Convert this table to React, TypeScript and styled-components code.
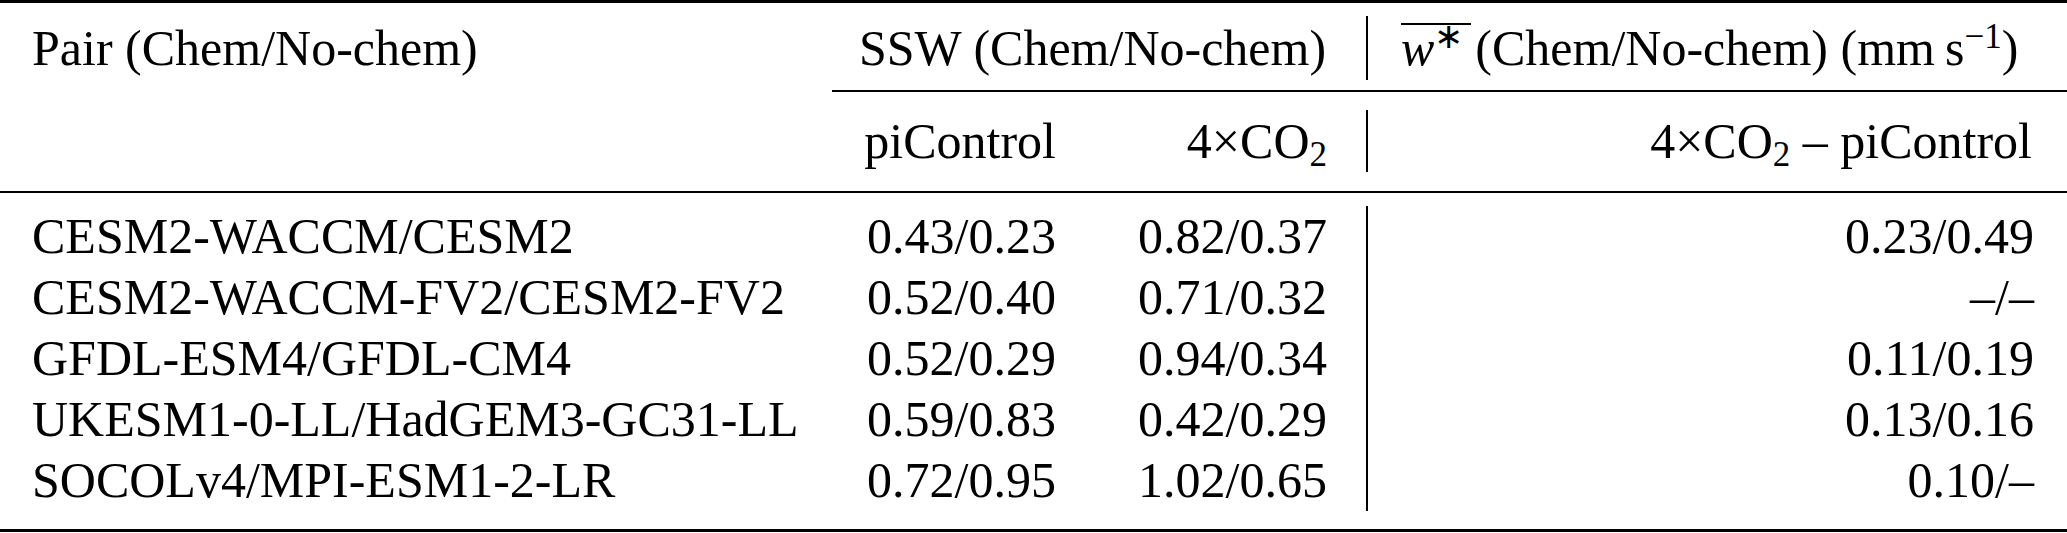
import { Fragment } from "react";
import styled, { createGlobalStyle } from "styled-components";

const GlobalStyle = createGlobalStyle`
  html, body {
    margin: 0;
    padding: 0;
    background: #fff;
  }
`;

const COLUMNS = "821px 270px 275px 1fr";

type RuleProps = { $weight: number; $inset?: number };

const Rule = styled.div<RuleProps>`
  height: ${({ $weight }) => $weight}px;
  margin-left: ${({ $inset }) => $inset ?? 0}px;
  background: #000;
`;

type BandProps = { $top: number; $bottom: number; $line: number };

const Band = styled.div<BandProps>`
  display: grid;
  grid-template-columns: ${COLUMNS};
  padding: ${({ $top }) => $top}px 0 ${({ $bottom }) => $bottom}px;
  line-height: ${({ $line }) => $line}px;
  white-space: nowrap;
`;

type CellProps = {
  $align?: "left" | "right";
  $padLeft?: number;
  $padRight?: number;
  $span?: number;
  $divider?: boolean;
};

const Cell = styled.div<CellProps>`
  font-family: 'Liberation Serif', serif;
  font-size: 50px;
  color: #000;
  grid-column: span ${({ $span }) => $span ?? 1};
  text-align: ${({ $align }) => $align ?? "left"};
  padding-left: ${({ $padLeft }) => $padLeft ?? 0}px;
  padding-right: ${({ $padRight }) => $padRight ?? 0}px;
  border-left: ${({ $divider }) => ($divider ? "2px solid #000" : "none")};
`;

const MathVar = styled.span`
  position: relative;
  display: inline-block;
  font-family: 'Liberation Serif', serif;
  font-style: italic;
  padding: 0 12px 0 6px;

  &::before {
    content: "";
    position: absolute;
    left: 6px;
    right: 4px;
    top: 7px;
    height: 2px;
    background: #000;
  }
`;

const Sup = styled.sup`
  font-family: 'Liberation Serif', serif;
  font-size: 70%;
  font-style: normal;
  line-height: 0;
  vertical-align: 0.5em;
`;

const Sub = styled.sub`
  font-family: 'Liberation Serif', serif;
  font-size: 70%;
  line-height: 0;
  vertical-align: -0.22em;
`;

const CO2 = () => (
  <>
    4×CO<Sub>2</Sub>
  </>
);

type Row = {
  pair: string;
  pi: string;
  co2: string;
  w: string;
};

const rows: Row[] = [
  { pair: "CESM2-WACCM/CESM2", pi: "0.43/0.23", co2: "0.82/0.37", w: "0.23/0.49" },
  { pair: "CESM2-WACCM-FV2/CESM2-FV2", pi: "0.52/0.40", co2: "0.71/0.32", w: "–/–" },
  { pair: "GFDL-ESM4/GFDL-CM4", pi: "0.52/0.29", co2: "0.94/0.34", w: "0.11/0.19" },
  { pair: "UKESM1-0-LL/HadGEM3-GC31-LL", pi: "0.59/0.83", co2: "0.42/0.29", w: "0.13/0.16" },
  { pair: "SOCOLv4/MPI-ESM1-2-LR", pi: "0.72/0.95", co2: "1.02/0.65", w: "0.10/–" },
];

const App = () => {
  return (
    <>
      <GlobalStyle />
      <Rule $weight={3} />
      <Band $top={13} $bottom={10} $line={64}>
        <Cell $padLeft={32}>Pair (Chem/No-chem)</Cell>
        <Cell $span={2} $padLeft={38}>
          SSW (Chem/No-chem)
        </Cell>
        <Cell $divider $padLeft={27}>
          <MathVar>
            w<Sup>∗</Sup>
          </MathVar>
          (Chem/No-chem) (mm&#8201;s<Sup>−1</Sup>)
        </Cell>
      </Band>
      <Rule $weight={2} $inset={832} />
      <Band $top={18} $bottom={19} $line={62}>
        <Cell />
        <Cell $align="right" $padRight={35}>
          piControl
        </Cell>
        <Cell $align="right" $padRight={39}>
          <CO2 />
        </Cell>
        <Cell $divider $align="right" $padRight={35}>
          <CO2 /> – piControl
        </Cell>
      </Band>
      <Rule $weight={2} />
      <Band $top={13} $bottom={18} $line={61}>
        {rows.map((r) => (
          <Fragment key={r.pair}>
            <Cell $padLeft={32}>{r.pair}</Cell>
            <Cell $align="right" $padRight={35}>
              {r.pi}
            </Cell>
            <Cell $align="right" $padRight={39}>
              {r.co2}
            </Cell>
            <Cell $divider $align="right" $padRight={33}>
              {r.w}
            </Cell>
          </Fragment>
        ))}
      </Band>
      <Rule $weight={3} />
    </>
  );
};

export default App;
